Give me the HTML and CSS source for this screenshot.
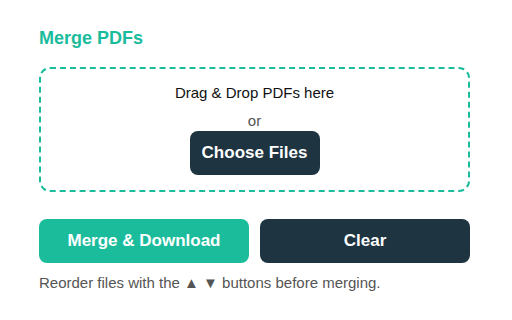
FILE: index.html
```html
<!DOCTYPE html>
<html lang="en">
<head>
    <meta charset="UTF-8">
    <meta name="viewport" content="width=device-width, initial-scale=1.0">
    <title>Merge PDFs</title>
    <link rel="stylesheet" href="styles.css">
</head>
<body>
    <div class="panel">
        <h2 class="panel-title">Merge PDFs</h2>

        <div class="drop-zone" id="dropZone">
            <p class="drop-text">Drag &amp; Drop PDFs here</p>
            <p class="drop-or">or</p>
            <button class="btn btn-dark btn-choose" id="chooseBtn">Choose Files</button>
        </div>

        <div class="actions">
            <button class="btn btn-teal" id="mergeBtn">Merge &amp; Download</button>
            <button class="btn btn-dark" id="clearBtn">Clear</button>
        </div>

        <p class="hint">Reorder files with the ▲ ▼ buttons before merging.</p>
    </div>
</body>
</html>
```

FILE: styles.css
```css
body {
    margin: 0;
    background-color: #fff;
    font-family: "Liberation Sans", Arial, sans-serif;
    color: #111;
}

.panel {
    width: 431px;
    padding: 28px 0 0 39px;
}

.panel-title {
    margin: 0 0 18px;
    font-size: 18px;
    line-height: 21px;
    font-weight: bold;
    color: #1abc9c;
}

.drop-zone {
    height: 121px;
    border: 2px dashed #1abc9c;
    border-radius: 11px;
    display: flex;
    flex-direction: column;
    align-items: center;
}

.drop-text {
    margin: 15px 0 0;
    font-size: 15px;
    line-height: 18px;
    color: #111;
}

.drop-or {
    margin: 10px 0 0;
    font-size: 15px;
    line-height: 18px;
    color: #555;
}

.btn {
    border: none;
    border-radius: 8px;
    height: 44px;
    font-family: inherit;
    font-size: 17px;
    font-weight: bold;
    color: #fff;
    cursor: pointer;
}

.btn-dark {
    background-color: #1e3441;
}

.btn-teal {
    background-color: #1abc9c;
}

.btn-choose {
    width: 130px;
    margin-top: 1px;
}

.actions {
    display: flex;
    gap: 11px;
    margin-top: 27px;
}

.actions .btn {
    flex: 1;
}

.hint {
    margin: 11px 0 0;
    font-size: 15px;
    line-height: 18px;
    color: #555;
}
```
